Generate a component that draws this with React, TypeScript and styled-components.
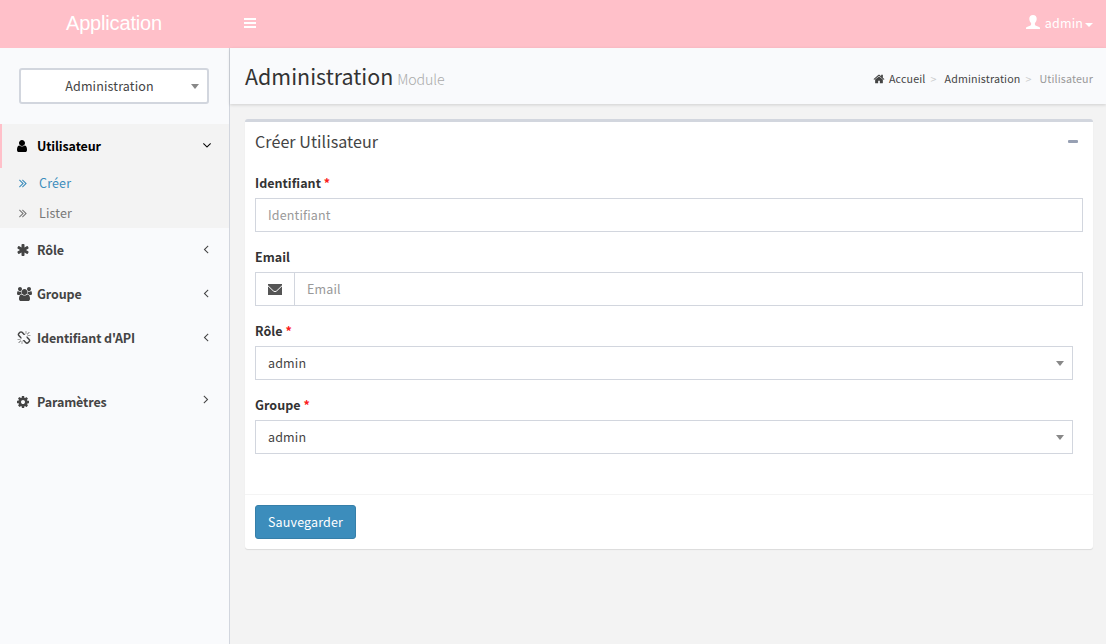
import React from "react";
import styled, { createGlobalStyle } from "styled-components";

const GlobalStyle = createGlobalStyle`
  *, *::before, *::after { box-sizing: border-box; }
  html, body { margin: 0; padding: 0; }
  body {
    font-family: "Source Sans Pro", "Noto Sans CJK SC", "Noto Sans", sans-serif;
    font-size: 12.5px;
    letter-spacing: 0.15px;
    line-height: 20px;
    color: #333;
    background: #f9fafc;
    overflow: hidden;
  }
  input, button { font: inherit; letter-spacing: inherit; }
`;

const paths = {
  user: "M1536 1399q0 109-62.5 187t-150.5 78h-854q-88 0-150.5-78t-62.5-187q0-85 8.5-160.5t31.5-152 58.5-131 94-89 134.5-34.5q131 128 313 128t313-128q76 0 134.5 34.5t94 89 58.5 131 31.5 152 8.5 160.5zm-256-887q0 159-112.5 271.5t-271.5 112.5-271.5-112.5-112.5-271.5 112.5-271.5 271.5-112.5 271.5 112.5 112.5 271.5z",
  asterisk: "M1546 1050q46 26 59.5 77.5t-12.5 97.5l-64 110q-26 46-77.5 59.5t-97.5-12.5l-266-153v307q0 52-38 90t-90 38h-128q-52 0-90-38t-38-90v-307l-266 153q-46 26-97.5 12.5t-77.5-59.5l-64-110q-26-46-12.5-97.5t59.5-77.5l266-154-266-154q-46-26-59.5-77.5t12.5-97.5l64-110q26-46 77.5-59.5t97.5 12.5l266 153v-307q0-52 38-90t90-38h128q52 0 90 38t38 90v307l266-153q46-26 97.5-12.5t77.5 59.5l64 110q26 46 12.5 97.5t-59.5 77.5l-266 154z",
  users: "M593 896q-162 5-265 128h-134q-82 0-138-40.5t-56-118.5q0-353 124-353 6 0 43.5 21t97.5 42.5 119 21.5q67 0 133-23-5 37-5 66 0 139 81 256zm1071 637q0 120-73 189.5t-194 69.5h-874q-121 0-194-69.5t-73-189.5q0-53 3.5-103.5t14-109 26.5-108.5 43-97.5 62-81 85.5-53.5 111.5-20q10 0 43 21.5t73 48 107 48 135 21.5 135-21.5 107-48 73-48 43-21.5q61 0 111.5 20t85.5 53.5 62 81 43 97.5 26.5 108.5 14 109 3.5 103.5zm-1024-1277q0 106-75 181t-181 75-181-75-75-181 75-181 181-75 181 75 75 181zm704 384q0 159-112.5 271.5t-271.5 112.5-271.5-112.5-112.5-271.5 112.5-271.5 271.5-112.5 271.5 112.5 112.5 271.5zm576 225q0 78-56 118.5t-138 40.5h-134q-103-123-265-128 81-117 81-256 0-29-5-66 66 23 133 23 59 0 119-21.5t97.5-42.5 43.5-21q124 0 124 353zm-128-609q0 106-75 181t-181 75-181-75-75-181 75-181 181-75 181 75 75 181z",
  unlink: "M503 1271l-256 256q-10 9-23 9-12 0-23-9-9-10-9-23t9-23l256-256q10-9 23-9t23 9q9 10 9 23t-9 23zm169 41v320q0 14-9 23t-23 9-23-9-9-23v-320q0-14 9-23t23-9 23 9 9 23zm-224-224q0 14-9 23t-23 9h-320q-14 0-23-9t-9-23 9-23 23-9h320q14 0 23 9t9 23zm1264 128q0 120-85 203l-147 146q-83 83-203 83-121 0-204-85l-334-335q-21-21-42-56l239-18 273 274q28 28 68 27.5t68-27.5l147-146q28-28 28-67 0-40-28-68l-274-275 18-239q35 21 56 42l336 336q84 86 84 204zm-617-724l-239 18-273-274q-28-28-68-28-39 0-68 27l-147 146q-28 28-28 67 0 40 28 68l274 274-18 240q-35-21-56-42l-336-336q-84-86-84-204 0-120 85-203l147-146q83-83 203-83 121 0 204 85l334 335q21 21 42 56zm633 84q0 14-9 23t-23 9h-320q-14 0-23-9t-9-23 9-23 23-9h320q14 0 23 9t9 23zm-544-544v320q0 14-9 23t-23 9-23-9-9-23v-320q0-14 9-23t23-9 23 9 9 23zm407 151l-256 256q-11 9-23 9t-23-9q-9-10-9-23t9-23l256-256q10-9 23-9t23 9q9 10 9 23t-9 23z",
  cog: "M1152 896q0-106-75-181t-181-75-181 75-75 181 75 181 181 75 181-75 75-181zm512-109v222q0 12-8 23t-20 13l-185 28q-19 54-39 91 35 50 107 138 10 12 10 25t-9 23q-27 37-99 108t-94 71q-12 0-26-9l-138-108q-44 23-91 38-16 136-29 186-7 28-36 28h-222q-14 0-24.5-8.5t-11.5-21.5l-28-184q-49-16-90-37l-141 107q-10 9-25 9-14 0-25-11-126-114-165-168-7-10-7-23 0-12 8-23 15-21 51-66.5t54-70.5q-27-50-41-99l-183-27q-13-2-21-12.5t-8-23.5v-222q0-12 8-23t19-13l186-28q14-46 39-92-40-57-107-138-10-12-10-24 0-10 9-23 26-36 98.5-107.5t94.5-71.5q13 0 26 10l138 107q44-23 91-38 16-136 29-186 7-28 36-28h222q14 0 24.5 8.5t11.5 21.5l28 184q49 16 90 37l142-107q9-9 24-9 13 0 25 10 129 119 165 170 7 8 7 22 0 12-8 23-15 21-51 66.5t-54 70.5q26 50 41 98l183 28q13 2 21 12.5t8 23.5z",
  home: "M1472 992v480q0 26-19 45t-45 19h-384v-384h-256v384h-384q-26 0-45-19t-19-45v-480q0-1 .5-3t.5-3l575-474 575 474q1 2 1 6zm223-69l-62 74q-8 9-21 11h-3q-13 0-21-7l-692-577-692 577q-12 8-24 7-13-2-21-11l-62-74q-8-10-7-23.5t11-21.5l719-599q32-26 76-26t76 26l244 204v-195q0-14 9-23t23-9h192q14 0 23 9t9 23v408l219 182q10 8 11 21.5t-7 23.5z",
  double: "M979 960q0 13-10 23l-466 466q-10 10-23 10t-23-10l-50-50q-10-10-10-23t10-23l393-393-393-393q-10-10-10-23t10-23l50-50q10-10 23-10t23 10l466 466q10 10 10 23zm384 0q0 13-10 23l-466 466q-10 10-23 10t-23-10l-50-50q-10-10-10-23t10-23l393-393-393-393q-10-10-10-23t10-23l50-50q10-10 23-10t23 10l466 466q10 10 10 23z",
  right: "M1171 960q0 13-10 23l-466 466q-10 10-23 10t-23-10l-50-50q-10-10-10-23t10-23l393-393-393-393q-10-10-10-23t10-23l50-50q10-10 23-10t23 10l466 466q10 10 10 23z",
  left: "M1203 544q0 13-10 23l-393 393 393 393q10 10 10 23t-10 23l-50 50q-10 10-23 10t-23-10l-466-466q-10-10-10-23t10-23l466-466q10-10 23-10t23 10l50 50q10 10 10 23z",
  down: "M1395 736q0 13-10 23l-466 466q-10 10-23 10t-23-10l-466-466q-10-10-10-23t10-23l50-50q10-10 23-10t23 10l393 393 393-393q10-10 23-10t23 10l50 50q10 10 10 23z",
};
type IconName = keyof typeof paths;

const Glyph = styled.svg`
  display: block;
  flex: none;
  fill: currentColor;
  overflow: visible;
`;

const Icon = ({ name, size = 14 }: { name: IconName; size?: number }) => {
  const w = name === "users" ? 1920 : 1792;
  return (
    <Glyph viewBox={`0 0 ${w} 1792`} width={(size * w) / 1792} height={size}>
      <path d={paths[name]} />
    </Glyph>
  );
};

const Page = styled.div`
  display: flex;
  flex-direction: column;
  height: 644px;
`;

const TopBar = styled.header`
  display: flex;
  align-items: center;
  flex: none;
  height: 48px;
  background: #ffc0c9;
  color: #fff;
`;

const Brand = styled.div`
  width: 230px;
  padding: 0 15px 2px 13px;
  text-align: center;
  font: 20px/46px "Liberation Sans", Helvetica, Arial, sans-serif;
  letter-spacing: -0.17px;
`;

const MenuToggle = styled.div`
  margin-left: 14px;
  padding-bottom: 2px;
`;

const Account = styled.div`
  display: flex;
  align-items: center;
  margin-left: auto;
  padding: 0 13px 2px 0;
  gap: 5px;
`;

const AccountIcon = styled.span`
  padding-bottom: 2px;
`;

const AccountName = styled.span`
  display: flex;
  align-items: center;
  gap: 2px;
`;

const AccountCaret = styled.span`
  padding-top: 3px;
`;

const Caret = styled.i<{ $w: number; $h: number; $color: string }>`
  display: block;
  flex: none;
  border-style: solid;
  border-width: ${(p) => p.$h}px ${(p) => p.$w}px 0;
  border-color: ${(p) => p.$color} transparent transparent;
`;

const Body = styled.div`
  display: flex;
  flex: 1;
  min-height: 0;
`;

const Sidebar = styled.aside`
  width: 230px;
  flex: none;
  border-right: 1px solid #d2d6de;
  background: #f9fafc;
`;

const ModuleSelect = styled.div`
  display: flex;
  align-items: center;
  height: 36px;
  margin: 20px 20px 20px 19px;
  padding-right: 8px;
  border: 2px solid #d2d6de;
  border-radius: 3px;
  background: #fff;
  color: #444;
`;

const ModuleName = styled.span`
  flex: 1;
  padding-left: 7px;
  text-align: center;
`;

const MenuItem = styled.div<{ $active?: boolean; $gap?: boolean }>`
  display: flex;
  align-items: center;
  height: 44px;
  margin-top: ${(p) => (p.$gap ? 20 : 0)}px;
  padding: 0 15px 0 13px;
  border-left: 2px solid ${(p) => (p.$active ? "#ffc0c9" : "transparent")};
  background: ${(p) => (p.$active ? "#f3f3f3" : "transparent")};
  color: ${(p) => (p.$active ? "#000" : "#444")};
  font-weight: 600;
  letter-spacing: -0.12px;
`;

const MenuIcon = styled.span<{ $indent?: number }>`
  width: 22px;
  padding-left: ${(p) => p.$indent ?? 0}px;
`;

const MenuLabel = styled.span`
  flex: 1;
`;

const MenuArrow = styled.span<{ $lift: number; $inset?: number }>`
  padding-right: ${(p) => p.$inset ?? 0}px;
  padding-bottom: ${(p) => p.$lift * 2}px;
`;

const SubMenu = styled.div`
  height: 60px;
  background: #f3f3f3;
`;

const SubItem = styled.div<{ $active?: boolean }>`
  display: flex;
  align-items: center;
  height: 30px;
  padding-left: 16px;
  gap: 9px;
  color: ${(p) => (p.$active ? "#3c8dbc" : "#777")};
`;

const Main = styled.main`
  flex: 1;
  background: #f3f3f3;
`;

const ContentHeader = styled.div`
  display: flex;
  align-items: center;
  justify-content: space-between;
  height: 56px;
  padding: 0 13px 0 15px;
  background: #f9fafc;
  box-shadow: 0 1px 3px rgba(0, 0, 0, 0.15);
`;

const Title = styled.h1`
  margin: 0;
  padding-top: 3px;
  font-size: 21.4px;
  line-height: 26px;
  font-weight: 400;
  letter-spacing: 0.03px;
`;

const Subtitle = styled.small`
  font-size: 14.2px;
  font-weight: 300;
  color: #aaa;
  margin-left: 4px;
  letter-spacing: -0.15px;
`;

const Breadcrumb = styled.nav`
  display: flex;
  align-items: center;
  padding-top: 6px;
  font-size: 10.7px;
  letter-spacing: 0.14px;
  color: #444;
`;

const Crumb = styled.span<{ $muted?: boolean }>`
  display: flex;
  align-items: center;
  gap: 4px;
  color: ${(p) => (p.$muted ? "#999" : "#444")};
`;

const Separator = styled.span`
  padding: 0 8px 0 5px;
  color: #ccc;
`;

const Box = styled.section`
  margin: 15px 13px 0 15px;
  height: 430px;
  border-top: 3px solid #d2d6de;
  border-radius: 3px;
  background: #fff;
  box-shadow: 0 1px 1px rgba(0, 0, 0, 0.1);
`;

const BoxHeader = styled.div`
  display: flex;
  align-items: center;
  justify-content: space-between;
  height: 41px;
  padding: 0 15px 2px 10px;
  font-size: 16.1px;
  letter-spacing: 0.05px;
  color: #444;
`;

const BoxTitle = styled.span`
  padding-bottom: 2px;
`;

const Minus = styled.i`
  width: 10px;
  height: 3px;
  border-radius: 1px;
  background: #97a0b3;
`;

const Form = styled.div`
  height: 331px;
  padding: 10px;
`;

const Field = styled.div`
  margin-bottom: 15px;
`;

const Label = styled.label`
  display: block;
  height: 25px;
  font-weight: 700;
  letter-spacing: 0.03px;
`;

const Required = styled.span`
  color: #fb2020;
`;

const InputRow = styled.div`
  display: flex;
  height: 34px;
  border: 1px solid #d2d6de;
`;

const Addon = styled.span`
  display: flex;
  align-items: center;
  justify-content: center;
  width: 39px;
  border-right: 1px solid #d2d6de;
  color: #555;
`;

const Input = styled.input`
  flex: 1;
  padding: 0 12px;
  border: 0;
  outline: 0;
  background: transparent;
  &::placeholder { color: #999; opacity: 1; }
`;

const Select = styled.div`
  display: flex;
  align-items: center;
  justify-content: space-between;
  height: 34px;
  margin-right: 10px;
  padding: 0 8px 0 12px;
  border: 1px solid #d2d6de;
  color: #444;
`;

const BoxFooter = styled.div`
  padding: 10px;
  border-top: 1px solid #f4f4f4;
`;

const Button = styled.button`
  display: block;
  height: 34px;
  padding: 0 12px;
  border: 1px solid #367fa9;
  border-radius: 3px;
  background: #3c8dbc;
  color: #fff;
`;

const RequiredSelect = ({ label }: { label: string }) => (
  <Field>
    <Label>{label} <Required>*</Required></Label>
    <Select>
      admin
      <Caret $w={4} $h={5} $color="#888" />
    </Select>
  </Field>
);

const menu: { icon: IconName; indent: number; label: string; arrow: IconName; lift: number; gap?: boolean }[] = [
  { icon: "asterisk", indent: 1, label: "Rôle", arrow: "left", lift: 1 },
  { icon: "users", indent: 2, label: "Groupe", arrow: "left", lift: 1 },
  { icon: "unlink", indent: 1.5, label: "Identifiant d'API", arrow: "left", lift: 1 },
  { icon: "cog", indent: 1, label: "Paramètres", arrow: "right", lift: 3, gap: true },
];

export default function App() {
  return (
    <Page>
      <GlobalStyle />
      <TopBar>
        <Brand>Application</Brand>
        <MenuToggle>
          <Glyph width="12" height="10" viewBox="0 0 12 10">
            <path d="M0 0h12v2H0zM0 4h12v2H0zM0 8h12v2H0z" />
          </Glyph>
        </MenuToggle>
        <Account>
          <AccountIcon>
            <Glyph width="14" height="14" viewBox="0 0 14 14">
              <path d="M7 0C9.400 0 10.700 1.400 10.700 3.700C10.700 5.500 9.900 7.100 8.900 8V9.600C8.900 10.200 9.300 10.500 10 10.800L12.500 11.800C13.500 12.200 14 12.500 14 13.200V14H0V13.200C0 12.500 .5 12.200 1.500 11.800L4 10.800C4.700 10.500 5.100 10.200 5.100 9.600V8C4.100 7.100 3.300 5.500 3.300 3.700C3.300 1.400 4.600 0 7 0Z" />
            </Glyph>
          </AccountIcon>
          <AccountName>
            admin
            <AccountCaret><Caret $w={4} $h={4} $color="#fff" /></AccountCaret>
          </AccountName>
        </Account>
      </TopBar>
      <Body>
        <Sidebar>
          <ModuleSelect>
            <ModuleName>Administration</ModuleName>
            <Caret $w={4} $h={5} $color="#888" />
          </ModuleSelect>
          <MenuItem $active>
            <MenuIcon><Icon name="user" /></MenuIcon>
            <MenuLabel>Utilisateur</MenuLabel>
            <MenuArrow $lift={1}><Icon name="down" /></MenuArrow>
          </MenuItem>
          <SubMenu>
            <SubItem $active><Icon name="double" />Créer</SubItem>
            <SubItem><Icon name="double" />Lister</SubItem>
          </SubMenu>
          {menu.map((m) => (
            <MenuItem key={m.label} $gap={m.gap}>
              <MenuIcon $indent={m.indent}><Icon name={m.icon} /></MenuIcon>
              <MenuLabel>{m.label}</MenuLabel>
              <MenuArrow $lift={m.lift} $inset={0.6}><Icon name={m.arrow} /></MenuArrow>
            </MenuItem>
          ))}
        </Sidebar>
        <Main>
          <ContentHeader>
            <Title>Administration<Subtitle>Module</Subtitle></Title>
            <Breadcrumb>
              <Crumb><Icon name="home" size={12} />Accueil</Crumb>
              <Separator>&gt;</Separator>
              <Crumb>Administration</Crumb>
              <Separator>&gt;</Separator>
              <Crumb $muted>Utilisateur</Crumb>
            </Breadcrumb>
          </ContentHeader>
          <Box>
            <BoxHeader>
              <BoxTitle>Créer Utilisateur</BoxTitle>
              <Minus />
            </BoxHeader>
            <Form>
              <Field>
                <Label>Identifiant <Required>*</Required></Label>
                <InputRow><Input placeholder="Identifiant" /></InputRow>
              </Field>
              <Field>
                <Label>Email</Label>
                <InputRow>
                  <Addon>
                    <Glyph width="14" height="11" viewBox="0 0 14 11">
                      <path d="M0 0H14V11H0Z" />
                      <path d="M-.2 1.600L5.300 6.900Q7 8.500 8.700 6.900L14.200 1.600" fill="none" stroke="#fff" />
                    </Glyph>
                  </Addon>
                  <Input placeholder="Email" />
                </InputRow>
              </Field>
              <RequiredSelect label="Rôle" />
              <RequiredSelect label="Groupe" />
            </Form>
            <BoxFooter>
              <Button>Sauvegarder</Button>
            </BoxFooter>
          </Box>
        </Main>
      </Body>
    </Page>
  );
}
